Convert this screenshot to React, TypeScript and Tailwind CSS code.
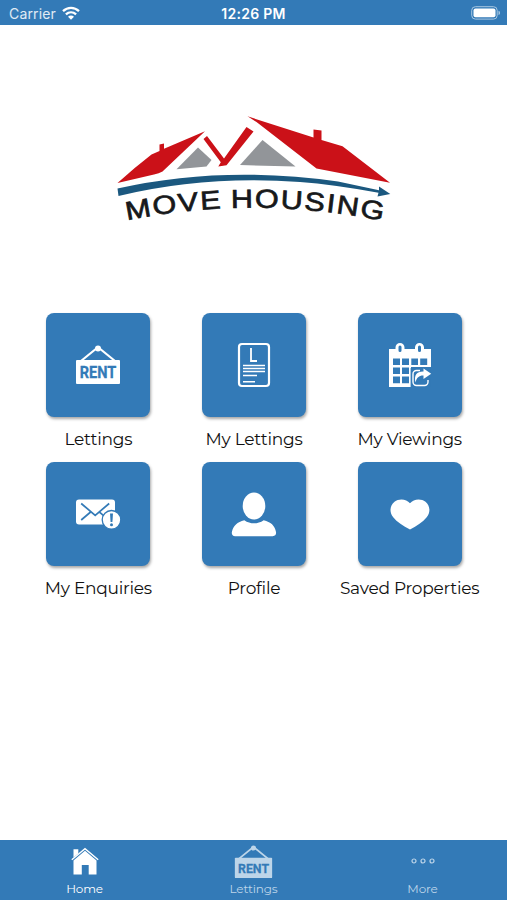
import type { ReactNode } from 'react'

function RentIcon({ className }: { className?: string }) {
  return (
    <svg viewBox="0 0 46 40" className={className} fill="currentColor">
      <path d="M6 16 22 3h2l16 13" fill="none" stroke="currentColor" strokeWidth="2.2" />
      <circle cx="23" cy="3.4" r="3" />
      <rect x="1" y="15" width="44" height="24" rx="1" />
      <text
        x="4.8"
        y="33"
        textLength="36.5"
        lengthAdjust="spacingAndGlyphs"
        fill="#337ab7"
        stroke="#337ab7"
        strokeWidth="0.3"
        className="font-['Roboto'] text-[16px] font-bold"
      >
        RENT
      </text>
    </svg>
  )
}

function DocumentIcon() {
  return (
    <svg viewBox="0 0 34 46" className="h-[46px] w-[34px]" fill="none" stroke="white">
      <rect x="2" y="2" width="30" height="42" rx="3" strokeWidth="2.2" />
      <path d="M14 6v13h6" strokeWidth="1.8" />
      <path d="M6 23.5h22M6 26.5h22M6 29.5h22M6 33.5h14M6 39.7h12" strokeWidth="1.5" />
    </svg>
  )
}

function CalendarIcon() {
  return (
    <svg viewBox="0 0 44 46" className="h-[46px] w-[44px]">
      <path
        fill="white"
        fillRule="evenodd"
        d="M1 7h6.5V5.5a4.5 4.5 0 0 1 9 0V7H27V5.5a4.5 4.5 0 0 1 9 0V7h7v18H23v20H1ZM10.5 5v3.5a1.5 1.5 0 0 0 3 0V5a1.5 1.5 0 0 0-3 0ZM30 5v3.5a1.5 1.5 0 0 0 3 0V5a1.5 1.5 0 0 0-3 0ZM5 16.5h7v6.5H5ZM14 16.5h7v6.5h-7ZM23.3 16.5h6.7v6.5h-6.7ZM32.2 16.5h7v6.5h-7ZM5 25.5h7v6.5H5ZM14 25.5h7v6.5h-7ZM5 34.5h7v6.7H5ZM14 34.5h7v6.7h-7Z"
      />
      <rect x="22.6" y="26" width="20" height="19" fill="#337ab7" />
      <path
        d="M32 28.5h-3.5a3.5 3.5 0 0 0-3.5 3.5v8a3.5 3.5 0 0 0 3.5 3.5h8a3.5 3.5 0 0 0 3.5-3.5v-2"
        fill="none"
        stroke="white"
        strokeWidth="1.4"
      />
      <path d="M27.5 40.5c-1.8-7.5 1.4-11.2 8-11V26.5l7.7 5.2-7.7 5.4v-3.5c-4.3-.2-6.7 1.8-8 6.9Z" fill="white" />
    </svg>
  )
}

function EnquiryIcon() {
  return (
    <svg viewBox="0 0 46 32" className="h-[32px] w-[46px]">
      <rect x="1" y="1.5" width="39" height="25" rx="3" fill="white" />
      <path
        d="m6.2 5.5 14 11.8 14-11.8M6.2 22l10-8.5M24.2 13.8l5 4.4"
        fill="none"
        stroke="#337ab7"
        strokeWidth="1.7"
      />
      <circle cx="36.5" cy="21.8" r="9.3" fill="white" stroke="#337ab7" strokeWidth="1.3" />
      <path d="M35 15.5h3l-.6 8.5h-1.8Z" fill="#337ab7" />
      <circle cx="36.5" cy="26.8" r="1.5" fill="#337ab7" />
    </svg>
  )
}

function ProfileIcon() {
  return (
    <svg viewBox="0 0 46 46" className="h-[46px] w-[46px]" fill="white">
      <ellipse cx="23" cy="15" rx="11.3" ry="13.4" />
      <path d="M13.3 29.2c6.2 4.2 13.2 4.2 19.4 0 7 1.6 11.2 5.5 12.3 11.7.4 2.6-.8 4.3-3.3 4.3H4.1c-2.5 0-3.7-1.7-3.2-4.3 1.3-5.9 5.4-10.1 12.4-11.7Z" />
    </svg>
  )
}

function HeartIcon() {
  return (
    <svg viewBox="0 0 40 32" className="h-[32px] w-[40px]" fill="white">
      <path d="M20 5.2C23.5.9 31 .1 35.5 3.8c4.6 4 5.3 10.2 1.2 15.4C32.8 24 27 27.6 20 31.5 13 27.6 7 24 3.2 19.2-.9 14-.2 7.8 4.5 3.8 9 .1 16.5.9 20 5.2Z" />
    </svg>
  )
}

function HomeIcon() {
  return (
    <svg viewBox="0 0 28 28" className="mb-[3px] h-[28px] w-[28px]">
      <path d="M2.5 2.2h4.8v4.2l-4.8 4Z" fill="white" />
      <path d="m.8 12.7 13.2-11 13.2 11" fill="none" stroke="white" strokeWidth="1.4" />
      <path d="m2.5 13.6 11.5-9.8 11.5 9.8v13.8h-7.8V18h-6.9v9.4H2.5Z" fill="white" />
    </svg>
  )
}

function MoreIcon() {
  return (
    <svg viewBox="0 0 26 8" className="mb-[3px] h-[8px] w-[26px]" fill="none" stroke="currentColor" strokeWidth="1.2">
      <circle cx="4" cy="4" r="2" />
      <circle cx="13" cy="4" r="2" />
      <circle cx="22" cy="4" r="2" />
    </svg>
  )
}

function Logo() {
  return (
    <svg viewBox="110 105 290 125" className="ml-[3px] h-[125px] w-[290px]" role="img" aria-label="Move Housing">
      <g fill="#cb1118">
        <path d="M117.5 183Q134 168 151.5 154.5L159.5 151V144.5L164 143.5V148.8L205 131.3 162.5 171.5Q159 173.5 154 174.5Z" />
        <path d="m203.5 139 3.5-3 17 22.5 22.5-31.5 7 4.5-27 33.8-8.2 1.2 2.5-4.3Z" />
        <path d="m247.5 116.3 66 21.3v-8l8 1v9.3l21 6.4 47.5 36.4-73.5-14.2-60-46.5Z" />
      </g>
      <g fill="#929599">
        <path d="M198 147.5 211.5 160l-5 6.5-30 2.7Z" />
        <path d="M262.5 140 295.5 166.5 240 165Z" />
      </g>
      <path
        d="M117.5 188.5Q222 165 338 181.5L379 190.3V186.5L390.3 194 377.5 196.5 378.5 192.7Q333 184.5 300 182Q205 175 118.5 196Z"
        fill="#1b587f"
      />
      <path id="logo-arc" d="M127 220.3Q254 194.5 386 221.5" fill="none" />
      <text
        fill="#17181a"
        stroke="#17181a"
        strokeWidth="0.7"
        className="font-['Liberation_Sans',Arial,sans-serif] text-[26px] tracking-[1.4px] [word-spacing:-1.5px]"
      >
        <textPath href="#logo-arc" textLength="259" lengthAdjust="spacingAndGlyphs">
          MOVE HOUSING
        </textPath>
      </text>
    </svg>
  )
}

function StatusBar() {
  return (
    <header className="grid h-[25px] shrink-0 grid-cols-3 items-center bg-[#337ab7] pt-[2px] font-['Inter',sans-serif] text-[14px] text-white">
      <div className="flex items-center gap-[6px] pl-[9px]">
        <span className="w-[47px] whitespace-nowrap tracking-[0.15px] text-white/85">Carrier</span>
        <svg viewBox="0 0 18 14" className="mb-[2px] h-[14px] w-[18px]" fill="none" stroke="white" strokeWidth="2.3">
          <path d="M1 5.2c4.7-4.4 11.3-4.4 16 0M3.9 8.4c3-2.8 7.2-2.8 10.2 0" />
          <path d="M6 10.7c1.8-1.6 4.2-1.6 6 0L9 13.8Z" fill="white" stroke="none" />
        </svg>
      </div>
      <span className="text-center text-[14px] font-semibold tracking-[0.3px]">12:26 PM</span>
      <svg viewBox="0 0 30 14" className="mr-[6px] mb-[2px] h-[14px] w-[30px] justify-self-end">
        <rect x="0.7" y="0.7" width="25.5" height="12.4" rx="3.7" fill="none" stroke="#a8c7e1" />
        <rect x="2.5" y="2.5" width="22" height="8.8" rx="2" fill="white" />
        <path d="M27.5 4.7c2 .6 2 3.8 0 4.4Z" fill="#a8c7e1" />
      </svg>
    </header>
  )
}

type TileProps = { label: string; icon: ReactNode }

function Tile({ label, icon }: TileProps) {
  return (
    <button className="flex h-[149px] flex-col items-center">
      <span className="flex size-[104px] items-center justify-center rounded-[8px] bg-[#337ab7] text-white shadow-[1px_2px_3px_rgba(0,0,0,0.35)]">
        {icon}
      </span>
      <span className="mt-[10px] text-[17px] leading-6 tracking-[-0.25px] whitespace-nowrap text-[#111]">
        {label}
      </span>
    </button>
  )
}

const tiles: TileProps[] = [
  { label: 'Lettings', icon: <RentIcon className="h-[40px] w-[46px]" /> },
  { label: 'My Lettings', icon: <DocumentIcon /> },
  { label: 'My Viewings', icon: <CalendarIcon /> },
  { label: 'My Enquiries', icon: <EnquiryIcon /> },
  { label: 'Profile', icon: <ProfileIcon /> },
  { label: 'Saved Properties', icon: <HeartIcon /> },
]

const tabs = [
  { label: 'Home', icon: <HomeIcon />, tone: 'text-white' },
  { label: 'Lettings', icon: <RentIcon className="mb-[2px] h-[34px] w-[39px]" />, tone: 'text-[#bdd5e9]' },
  { label: 'More', icon: <MoreIcon />, tone: 'text-[#bdd5e9]' },
]

export default function App() {
  return (
    <div className="flex h-[900px] w-[507px] flex-col bg-white font-['Montserrat','Inter',sans-serif]">
      <StatusBar />
      <main className="flex flex-1 flex-col items-center pt-[80px]">
        <Logo />
        <div className="mt-[83px] ml-[1px] grid w-[467px] grid-cols-3">
          {tiles.map((tile) => (
            <Tile key={tile.label} {...tile} />
          ))}
        </div>
      </main>
      <nav className="grid h-[60px] shrink-0 grid-cols-3 bg-[#337ab7]">
        {tabs.map((tab) => (
          <button key={tab.label} className={`flex flex-col items-center pt-[5px] ${tab.tone}`}>
            <span className="flex h-[35px] items-center">{tab.icon}</span>
            <span className="text-[12px] leading-[18px] tracking-[-0.15px]">{tab.label}</span>
          </button>
        ))}
      </nav>
    </div>
  )
}
